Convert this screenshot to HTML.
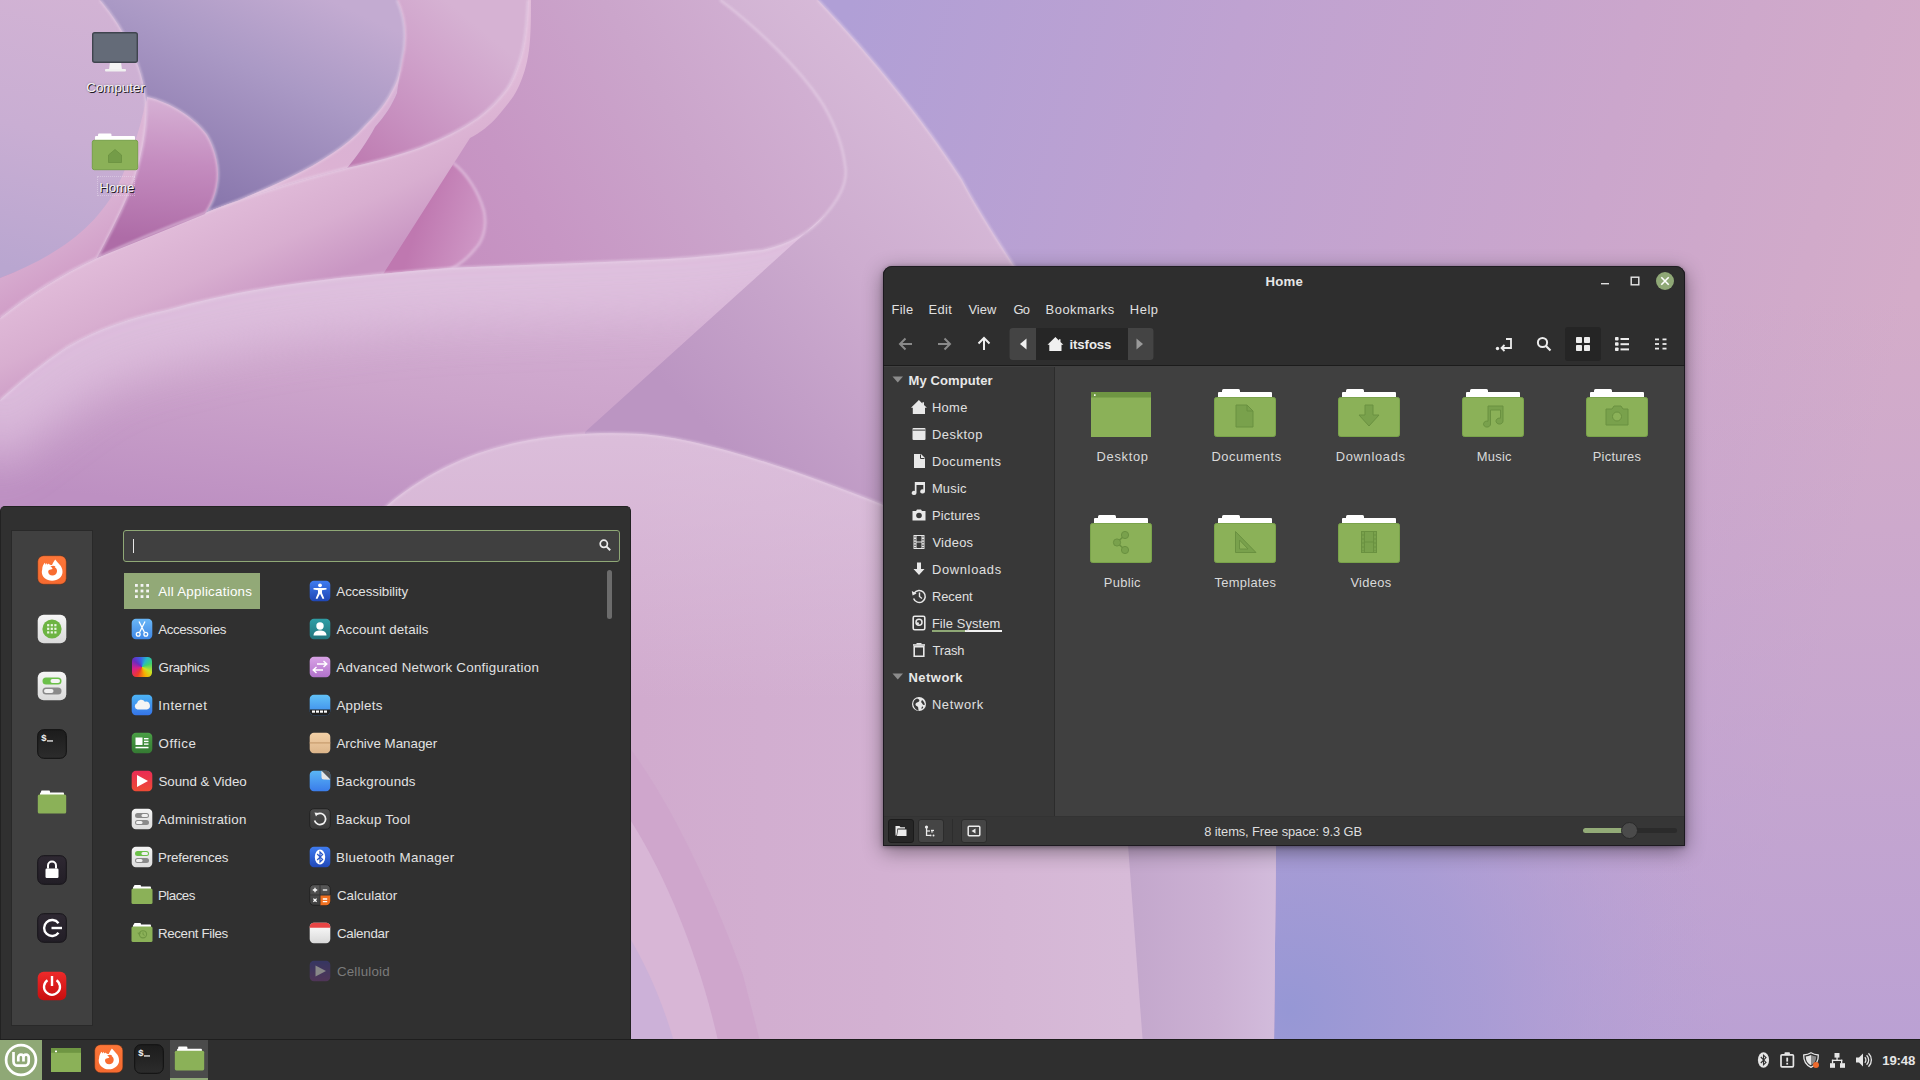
<!DOCTYPE html>
<html lang="en">
<head>
<meta charset="utf-8">
<title>Linux Mint Cinnamon Desktop</title>
<style>
*{box-sizing:border-box;margin:0;padding:0}
html,body{width:1920px;height:1080px;overflow:hidden;background:#c9a8cf;font-family:"Liberation Sans",sans-serif;color:#dcdcdc}
#wall{position:absolute;left:0;top:0;width:1920px;height:1080px}
.abs{position:absolute}
.t{position:absolute;white-space:nowrap;line-height:1}
/* taskbar */
#panel{position:absolute;left:0;top:1039px;width:1920px;height:41px;background:#2f2f2f;border-top:1px solid #1e1e1e}
/* menu */
#menu{position:absolute;left:0;top:506px;width:631px;height:533px;background:#303030;border:1px solid #222;border-bottom:none;border-radius:5px 5px 0 0}
#favs{position:absolute;left:11px;top:530px;width:82px;height:496px;background:#404040;border:1px solid #292929}
#search{position:absolute;left:123px;top:530px;width:497px;height:32px;background:#404040;border:1px solid #8fa876;border-radius:3px}
#sel{position:absolute;left:124px;top:573px;width:136px;height:36px;background:#92a977}
.mi{position:absolute;font-size:13.9px;color:#e0e0e0;white-space:nowrap;line-height:16px}
/* window */
#win{position:absolute;left:883px;top:266px;width:802px;height:580px;background:#404040;border-radius:9px 9px 0 0;box-shadow:0 5px 20px rgba(0,0,0,.42),0 1px 4px rgba(0,0,0,.35);overflow:hidden}
#hdr{position:absolute;left:0;top:0;width:802px;height:100px;background:#2e2e2e;border-bottom:1px solid #1c1c1c}
#side{position:absolute;left:0;top:101px;width:172px;height:449px;background:#383838;border-right:1px solid #2c2c2c}
#status{position:absolute;left:0;top:550px;width:802px;height:29px;background:#363636;border-top:1px solid #333}
.sb{position:absolute;font-size:13.4px;color:#dedede;white-space:nowrap;line-height:16px}
.lbl{position:absolute;font-size:13.5px;color:#d8d8d8;white-space:nowrap;line-height:16px;text-align:center;width:120px}
.dl{font-size:13.4px;color:#fff;line-height:16px;text-shadow:1px 1px 1px rgba(0,0,0,.85),0 0 2px rgba(0,0,0,.4)}
#winb{position:absolute;left:883px;top:266px;width:802px;height:580px;border:1px solid rgba(24,20,28,.85);border-top-color:rgba(24,20,28,.6);border-radius:9px 9px 0 0}
</style>
</head>
<body>
<svg id="wall" viewBox="0 0 1920 1080">
<defs>
<linearGradient id="bg" x1="850" y1="0" x2="1920" y2="260" gradientUnits="userSpaceOnUse">
<stop offset="0" stop-color="#b09fd6"/><stop offset=".35" stop-color="#bfa2d1"/><stop offset=".7" stop-color="#cba6cc"/><stop offset="1" stop-color="#d4acc9"/>
</linearGradient>
<linearGradient id="bgv" x1="0" y1="300" x2="0" y2="1080" gradientUnits="userSpaceOnUse">
<stop offset="0" stop-color="#b69fd6" stop-opacity="0"/><stop offset="1" stop-color="#b09cd8" stop-opacity=".75"/>
</linearGradient>
<radialGradient id="blue" cx="1290" cy="1010" r="430" gradientUnits="userSpaceOnUse">
<stop offset="0" stop-color="#9697d5"/><stop offset=".45" stop-color="#a59bd5" stop-opacity=".8"/><stop offset="1" stop-color="#b5a0d4" stop-opacity="0"/>
</radialGradient>
<linearGradient id="gG" x1="980" y1="150" x2="700" y2="420" gradientUnits="userSpaceOnUse">
<stop offset="0" stop-color="#d7bad8"/><stop offset=".45" stop-color="#cdaccf"/><stop offset="1" stop-color="#bb95c2"/>
</linearGradient>
<linearGradient id="gGb" x1="1130" y1="0" x2="1274" y2="0" gradientUnits="userSpaceOnUse"><stop offset="0" stop-color="#c3a7cc"/><stop offset=".6" stop-color="#cbb0d3"/><stop offset="1" stop-color="#d2bbdb"/></linearGradient>
<linearGradient id="gHb" x1="640" y1="0" x2="1130" y2="0" gradientUnits="userSpaceOnUse"><stop offset="0" stop-color="#d1abce"/><stop offset=".5" stop-color="#d3b1d2"/><stop offset="1" stop-color="#d7bbd8"/></linearGradient>
<linearGradient id="gHt" x1="0" y1="430" x2="0" y2="700" gradientUnits="userSpaceOnUse"><stop offset="0" stop-color="#e0c6e0" stop-opacity=".7"/><stop offset="1" stop-color="#e0c6e0" stop-opacity="0"/></linearGradient>
<linearGradient id="gDE" x1="800" y1="40" x2="440" y2="260" gradientUnits="userSpaceOnUse"><stop offset="0" stop-color="#d2b1d3"/><stop offset=".35" stop-color="#cba5cb"/><stop offset=".75" stop-color="#c796c4"/><stop offset="1" stop-color="#c58fc0"/></linearGradient>
<linearGradient id="gEface" x1="330" y1="270" x2="300" y2="520" gradientUnits="userSpaceOnUse"><stop offset="0" stop-color="#d4b0d3"/><stop offset=".45" stop-color="#cca4cb"/><stop offset="1" stop-color="#bd90c2"/></linearGradient>
<linearGradient id="gH" x1="600" y1="430" x2="700" y2="1040" gradientUnits="userSpaceOnUse">
<stop offset="0" stop-color="#d8bbd9"/><stop offset=".3" stop-color="#d3b3d4"/><stop offset="1" stop-color="#cfabd0"/>
</linearGradient>
<linearGradient id="gD" x1="215" y1="210" x2="260" y2="310" gradientUnits="userSpaceOnUse"><stop offset="0" stop-color="#e0bad8"/><stop offset=".5" stop-color="#d8aed0"/><stop offset="1" stop-color="#c996c3"/></linearGradient>
<linearGradient id="gCin" x1="350" y1="165" x2="470" y2="20" gradientUnits="userSpaceOnUse"><stop offset="0" stop-color="#bd7ab0"/><stop offset=".35" stop-color="#c78fbf"/><stop offset=".7" stop-color="#d0a3cb"/><stop offset="1" stop-color="#d6b2d3"/></linearGradient>
<linearGradient id="gDr" x1="300" y1="0" x2="390" y2="0" gradientUnits="userSpaceOnUse">
<stop offset="0" stop-color="#c28abc" stop-opacity="0"/><stop offset="1" stop-color="#bd80b6" stop-opacity=".9"/>
</linearGradient>
<linearGradient id="gC" x1="400" y1="70" x2="220" y2="210" gradientUnits="userSpaceOnUse"><stop offset="0" stop-color="#d8b3d6"/><stop offset=".5" stop-color="#dcb2d3"/><stop offset="1" stop-color="#e0bcd9"/></linearGradient>
<linearGradient id="gPur" x1="330" y1="0" x2="230" y2="215" gradientUnits="userSpaceOnUse"><stop offset="0" stop-color="#c3abd1"/><stop offset=".4" stop-color="#aa99c5"/><stop offset="1" stop-color="#8876ac"/></linearGradient>
<linearGradient id="gA" x1="90" y1="0" x2="20" y2="270" gradientUnits="userSpaceOnUse"><stop offset="0" stop-color="#d2b3d4"/><stop offset=".5" stop-color="#c9aed3"/><stop offset="1" stop-color="#b9a6d0"/></linearGradient>
<linearGradient id="gAe" x1="50" y1="215" x2="80" y2="270" gradientUnits="userSpaceOnUse">
<stop offset="0" stop-color="#dcb5d5"/><stop offset="1" stop-color="#d19fc8"/>
</linearGradient>
<linearGradient id="gB" x1="170" y1="100" x2="160" y2="240" gradientUnits="userSpaceOnUse">
<stop offset="0" stop-color="#d6b0d4"/><stop offset=".45" stop-color="#c48cbf"/><stop offset="1" stop-color="#ae6ca7"/>
</linearGradient>
<linearGradient id="gF" x1="420" y1="215" x2="485" y2="235" gradientUnits="userSpaceOnUse"><stop offset="0" stop-color="#bf78b0"/><stop offset="1" stop-color="#cf98c6"/></linearGradient>
<filter id="b1"><feGaussianBlur stdDeviation="1.2"/></filter>
<filter id="b16" x="-20%" y="-50%" width="140%" height="200%"><feGaussianBlur stdDeviation="24"/></filter>
<filter id="b8"><feGaussianBlur stdDeviation="8"/></filter>
</defs>
<rect width="1920" height="1080" fill="url(#bg)"/>
<rect width="1920" height="1080" fill="url(#bgv)"/>
<rect width="1920" height="1080" fill="url(#blue)"/>
<!-- petal G outer -->
<path d="M818,0 C870,55 922,118 962,180 C998,250 1094,380 1180,520 C1255,655 1283,760 1276,845 L1274,1045 L0,1045 L0,0Z" fill="url(#gG)"/>
<!-- pink region DE -->
<path d="M528,0 C527,25 525,45 520,60 C515,75 512,82 507,89 C498,101 490,109 478,118 L470,135 L378,282 L450,268 C520,265 590,263 650,260 C700,258 735,253 763,250 C790,244 810,233 825,215 C840,198 848,180 845,165 C842,140 830,115 820,100 C800,70 760,30 720,0Z" fill="url(#gDE)"/>
<!-- small petal F interior -->
<path d="M453,163 C465,172 478,190 484,211 C487,225 484,240 475,249 C468,258 460,264 451,269 C435,274 410,277 378,282 L470,135Z" fill="url(#gF)"/>
<path d="M453,163 C465,172 478,190 484,211 C487,225 484,240 475,249 C468,258 460,264 451,269 C440,273 430,275 420,276" fill="none" stroke="#dcb6d8" stroke-width="3" opacity=".9" filter="url(#b1)"/>
<!-- C inner deep pink -->
<path d="M397,0 C404,15 408,35 402,60 C400,75 398,85 397,93 C392,105 385,116 375,127 C368,140 358,155 347,168 C375,162 400,155 422,147 C445,138 462,129 478,118 C490,109 498,101 507,89 C512,82 515,75 520,60 C525,45 527,25 528,0Z" fill="url(#gCin)"/>
<!-- purple inner -->
<path d="M95,0 L397,0 C404,15 408,35 402,60 C400,75 396,85 391,93 C385,105 375,116 364,127 C355,137 345,145 333,153 C320,162 305,170 289,178 C268,188 245,198 222,207 L200,215 L97,258Z" fill="url(#gPur)"/>
<!-- C rim -->
<path d="M402,60 C400,75 396,85 391,93 C385,105 375,116 364,127 C355,137 345,145 333,153 C320,162 305,170 289,178 C268,188 245,198 222,207 L200,215 C222,206 245,198 267,191 C295,182 320,175 347,168 C358,155 368,140 375,127 C385,116 392,105 397,93 C398,85 400,75 402,60Z" fill="url(#gC)"/>
<!-- petal D face -->
<path d="M528,0 C527,25 525,45 520,60 C515,75 512,82 507,89 C498,101 490,109 478,118 C462,129 445,138 422,147 C400,155 375,162 347,168 C320,175 295,182 267,191 C245,198 222,206 200,215 C160,230 125,245 97,258 C60,275 25,298 0,318 L0,400 C20,382 40,365 67,347 C100,328 130,318 167,310 C210,298 255,289 300,283 C330,279 355,277 378,282 L470,138 C480,133 490,125 497,117 C507,105 513,98 517,90 C523,78 527,65 529,50 C531,35 531,15 531,0Z" fill="url(#gD)"/>
<!-- petal E face -->
<clipPath id="cE"><path d="M0,400 C20,382 40,365 67,347 C100,328 130,318 167,310 C210,298 255,289 300,283 C350,276 400,272 450,268 C520,265 590,263 650,260 C700,258 735,253 763,250 C790,244 810,233 825,215 L585,432 L585,560 L0,560Z"/></clipPath>
<path d="M0,400 C20,382 40,365 67,347 C100,328 130,318 167,310 C210,298 255,289 300,283 C350,276 400,272 450,268 C520,265 590,263 650,260 C700,258 735,253 763,250 C790,244 810,233 825,215 L585,432 L585,560 L0,560Z" fill="url(#gEface)"/>
<g clip-path="url(#cE)"><path d="M-40,425 C20,382 40,365 67,347 C100,328 130,318 167,310 C210,298 255,289 300,283 C350,276 400,272 450,268 C520,265 590,263 650,260 C700,258 735,253 763,250 C790,244 810,233 840,200" fill="none" stroke="#e2c6e2" stroke-width="110" opacity=".72" filter="url(#b16)"/></g>
<!-- petal H -->
<path d="M380,512 C420,475 470,452 520,442 C560,434 600,432 640,434 C700,438 790,468 883,505 L1200,560 C1255,655 1283,760 1276,845 L1274,1045 L380,1045Z" fill="url(#gHb)"/>
<path d="M380,512 C420,475 470,452 520,442 C560,434 600,432 640,434 C700,438 790,468 883,505 L1200,560 L1255,700 L380,700Z" fill="url(#gHt)"/>
<path d="M1128,845 L1276,845 L1274,1045 L1143,1045Z" fill="url(#gGb)"/>
<!-- lower-left curves -->
<path d="M625,742 C671,800 716,900 743,975 L761,1045 L625,1045Z" fill="#cfa6cc"/>
<path d="M625,812 C664,870 699,955 719,1045 L625,1045Z" fill="#d8b6d6"/>
<path d="M625,930 C650,970 665,1010 675,1045 L625,1045Z" fill="#ccb1d8"/>
<!-- petal B -->
<path d="M147,97 C170,102 195,118 207,135 C216,150 220,170 217,185 C215,198 210,207 205,214 L97,258 L130,180Z" fill="url(#gB)"/>
<!-- petal A -->
<path d="M100,0 C125,30 142,65 146,100 C148,140 135,180 115,210 C100,232 60,255 0,278 L0,0Z" fill="url(#gA)"/>
<path d="M146,100 C148,140 135,180 128,195 C115,225 97,258 97,258 C60,275 25,298 0,318 L0,278 C60,255 98,225 118,185 C130,160 140,130 146,100Z" fill="url(#gAe)"/>
<!-- rims -->
<g fill="none" stroke="#ead6ea" stroke-width="2.6" opacity=".55" filter="url(#b1)">
<path d="M650,260 C700,258 735,253 763,250 C790,244 810,233 825,215 C840,198 848,180 845,165 C842,140 830,115 820,100 C800,70 760,30 720,0"/>
<path d="M818,0 C870,55 922,118 962,180 C998,250 1094,380 1180,520"/>
<path d="M380,512 C420,475 470,452 520,442 C560,434 600,432 640,434 C700,438 790,468 883,505"/>
<path d="M528,0 C527,25 525,45 520,60 C515,75 512,82 507,89 C498,101 490,109 478,118 C462,129 445,138 422,147 C400,155 375,162 347,168 C320,175 295,182 267,191 C245,198 222,206 200,215 C160,230 125,245 97,258 C60,275 25,298 0,318"/>
<path d="M397,0 C404,15 408,35 402,60 C400,75 396,85 391,93 C385,105 375,116 364,127 C355,137 345,145 333,153 C320,162 305,170 289,178 C268,188 245,198 222,207"/>
<path d="M0,400 C20,382 40,365 67,347 C100,328 130,318 167,310 C210,298 255,289 300,283 C350,276 400,272 450,268 C520,265 590,263 650,260"/>
<path d="M147,97 C170,102 195,118 207,135 C216,150 220,170 217,185 C215,198 210,207 205,214"/>
<path d="M100,0 C125,30 142,65 146,100 C148,140 135,180 128,195 C115,225 97,258 97,258"/>
</g>
</svg>
<svg class="abs" style="left:90px;top:30px" width="50" height="44" viewBox="0 0 50 44"><path d="M20,32 H31 L32,40 H19Z" fill="#f4f4f4"/><rect x="15" y="39" width="21" height="2.600" rx="1" fill="#f0f0f0"/><rect x="2.700" y="2.700" width="44.600" height="29.600" rx="2" fill="#646b78" stroke="#3f444e" stroke-width="1.400"/></svg>
<svg class="abs" style="left:91px;top:133px" width="48" height="38" viewBox="0 0 48 38"><rect x="7" y=".5" width="13.500" height="5" rx="1.200" fill="#fff"/><rect x="4" y="3" width="40" height="6" rx="1" fill="#fff"/><rect x="1.300" y="7.300" width="45.400" height="29.400" rx="2" fill="#8bb158" stroke="#77a049" stroke-width="1"/><path d="M24,16.500 L17.500,22 V29.500 H30.500 V22Z" fill="#749c48" stroke="#6a9140" stroke-width=".8"/></svg>
<div class="abs" style="left:97px;top:176px;width:38px;height:20px;border:1px dotted rgba(235,225,240,.45)"></div>
<div id="win">
<div id="hdr"></div>
<div id="side"></div>
<div id="status"></div>
</div>
<div id="winb"></div>
<!-- title + controls -->
<svg class="abs" style="left:1595px;top:271px" width="80" height="20" viewBox="0 0 80 20">
<rect x="6" y="12" width="8" height="1.4" fill="#e0e0e0"/>
<rect x="36.2" y="6.2" width="7.6" height="7.6" fill="none" stroke="#e8e8e8" stroke-width="1.4"/>
<circle cx="70" cy="10" r="9" fill="#8fa876"/>
<path d="M66.3,6.3 L73.7,13.7 M73.7,6.3 L66.3,13.7" stroke="#fff" stroke-width="1.6" fill="none"/>
</svg>
<!-- menubar -->
<!-- toolbar -->
<svg class="abs" style="left:890px;top:328px" width="270" height="32" viewBox="0 0 270 32">
<g fill="none" stroke-width="2" stroke-linecap="butt">
<path d="M22,16 H10.5 M15.5,10.5 L10,16 L15.5,21.5" stroke="#8a8a8a"/>
<path d="M48,16 H59.5 M54.5,10.5 L60,16 L54.5,21.5" stroke="#8a8a8a"/>
<path d="M94,22 V10.5 M88.5,15.5 L94,10 L99.5,15.5" stroke="#f0f0f0"/>
</g>
<rect x="119.5" y="0" width="144" height="32" rx="3" fill="#262626"/>
<path d="M122.500,0 H146 V32 H122.500 A3,3 0 0 1 119.500,29 V3 A3,3 0 0 1 122.500,0Z" fill="#444"/>
<path d="M238,0 H260.500 A3,3 0 0 1 263.500,3 V29 A3,3 0 0 1 260.500,32 H238Z" fill="#444"/>
<path d="M136.500,10.500 V21.500 L130,16Z" fill="#f0f0f0"/>
<path d="M246.500,10.500 V21.500 L253,16Z" fill="#9a9a9a"/>
<path transform="translate(157.5,8)" d="M7.900,1 L0,8.800 H1.800 V15 H14 V8.800 H15.900 L13,5.900 V3.300 H11.400 V4.400Z" fill="#f0f0f0"/>
</svg>
<svg class="abs" style="left:1490px;top:327px" width="190" height="34" viewBox="0 0 190 34">
<rect x="75" y="0" width="36" height="34" rx="3" fill="#252525"/>
<!-- path toggle -->
<g fill="none" stroke="#ececec" stroke-width="1.8"><path d="M16,12 H21 V21 H12"/><path d="M14.500,18 L11.500,21 L14.500,24"/></g><circle cx="7.500" cy="21.500" r="1.700" fill="#ececec"/>
<!-- search -->
<circle cx="52.500" cy="15.500" r="4.600" fill="none" stroke="#ececec" stroke-width="2"/><path d="M56,19 L60.500,23.500" stroke="#ececec" stroke-width="2.200"/>
<!-- grid -->
<g fill="#ececec"><rect x="86" y="10" width="6" height="6" rx=".8"/><rect x="94" y="10" width="6" height="6" rx=".8"/><rect x="86" y="18" width="6" height="6" rx=".8"/><rect x="94" y="18" width="6" height="6" rx=".8"/>
<!-- list -->
<rect x="125" y="10" width="3.600" height="3.600" rx=".8"/><rect x="125" y="15.200" width="3.600" height="3.600" rx=".8"/><rect x="125" y="20.400" width="3.600" height="3.600" rx=".8"/>
<rect x="130.500" y="11" width="8.500" height="2"/><rect x="130.500" y="16.200" width="8.500" height="2"/><rect x="130.500" y="21.400" width="8.500" height="2"/>
<!-- compact -->
<rect x="165" y="11.500" width="4" height="1.800"/><rect x="165" y="16.100" width="4" height="1.800"/><rect x="165" y="20.700" width="4" height="1.800"/>
<rect x="172.500" y="11.500" width="4" height="1.800"/><rect x="172.500" y="16.100" width="4" height="1.800"/><rect x="172.500" y="20.700" width="4" height="1.800"/>
</g>
</svg>
<svg class="abs" style="left:892px;top:376px" width="12" height="8" viewBox="0 0 12 8"><path d="M0.500,0.500 H11 L5.750,6.500Z" fill="#8c8c8c"/></svg>
<svg class="abs" style="left:892px;top:673px" width="12" height="8" viewBox="0 0 12 8"><path d="M0.500,0.500 H11 L5.750,6.500Z" fill="#8c8c8c"/></svg>
<svg class="abs" style="left:911px;top:399px" width="16" height="16" viewBox="0 0 16 16"><path d="M7.900,1 L0,8.800 H1.800 V15 H14 V8.800 H15.900 L13,5.900 V3.300 H11.400 V4.400Z" fill="#e8e8e8"/></svg>
<svg class="abs" style="left:911px;top:426px" width="16" height="16" viewBox="0 0 16 16"><rect x="1.500" y="2" width="13" height="12" rx="1" fill="#e8e8e8"/><rect x="1.500" y="3.600" width="13" height="1" fill="#383838"/></svg>
<svg class="abs" style="left:911px;top:453px" width="16" height="16" viewBox="0 0 16 16"><path d="M3,1 H10 L14,5 V15 H3Z" fill="#e8e8e8"/><path d="M9.500,1.500 V5.500 H13.500" fill="none" stroke="#383838" stroke-width="1"/></svg>
<svg class="abs" style="left:911px;top:480px" width="16" height="16" viewBox="0 0 16 16"><path d="M3.800,2 H14 V11.500 A2.400,2.100 0 1 1 12.300,9.500 V5 H5.500 V13 A2.400,2.100 0 1 1 3.800,11Z" fill="#e8e8e8"/></svg>
<svg class="abs" style="left:911px;top:507px" width="16" height="16" viewBox="0 0 16 16"><path d="M1.500,4 H5 L6,2.500 H10 L11,4 H14.500 V13.500 H1.500Z" fill="#e8e8e8"/><circle cx="8" cy="8.500" r="2.800" fill="#383838"/></svg>
<svg class="abs" style="left:911px;top:534px" width="16" height="16" viewBox="0 0 16 16"><path d="M2.500,1 H13.500 V15 H2.500Z M5.500,2 V7.500 H10.500 V2Z M5.500,8.500 V14 H10.500 V8.500Z M3.400,2.200 V3.600 H4.600 V2.200Z M3.400,5 V6.400 H4.600 V5Z M3.400,7.800 V9.200 H4.600 V7.800Z M3.400,10.600 V12 H4.600 V10.600Z M3.400,13 V14 H4.600 V13Z M11.400,2.200 V3.600 H12.600 V2.200Z M11.400,5 V6.400 H12.600 V5Z M11.400,7.800 V9.200 H12.600 V7.800Z M11.400,10.600 V12 H12.600 V10.600Z M11.400,13 V14 H12.600 V13Z" fill="#e8e8e8" fill-rule="evenodd"/></svg>
<svg class="abs" style="left:911px;top:561px" width="16" height="16" viewBox="0 0 16 16"><path d="M6,1.500 H10 V8 H13.500 L8,14 L2.500,8 H6Z" fill="#e8e8e8"/></svg>
<svg class="abs" style="left:911px;top:588px" width="16" height="16" viewBox="0 0 16 16"><path d="M3.200,5.200 A6,6 0 1 1 2.600,10.500" fill="none" stroke="#e8e8e8" stroke-width="1.500"/><path d="M0.800,3 L1.600,7.400 L5.600,5.600Z" fill="#e8e8e8"/><path d="M8.500,4.500 V8.500 L11,10.500" fill="none" stroke="#e8e8e8" stroke-width="1.400"/></svg>
<svg class="abs" style="left:911px;top:615px" width="16" height="16" viewBox="0 0 16 16"><rect x="2.200" y="1.200" width="11.600" height="13.600" rx="1.500" fill="none" stroke="#e8e8e8" stroke-width="1.600"/><circle cx="8" cy="7.300" r="3" fill="none" stroke="#e8e8e8" stroke-width="1.500"/><circle cx="6.700" cy="8.500" r="1.300" fill="#e8e8e8"/></svg>
<svg class="abs" style="left:911px;top:642px" width="16" height="16" viewBox="0 0 16 16"><path d="M3.200,4.800 H12.800 V14.200 H3.200Z" fill="none" stroke="#e8e8e8" stroke-width="1.600"/><rect x="2" y="2.200" width="12" height="1.600" fill="#e8e8e8"/><rect x="5.500" y="1" width="5" height="1.500" fill="#e8e8e8"/></svg>
<svg class="abs" style="left:911px;top:696px" width="16" height="16" viewBox="0 0 16 16"><circle cx="8" cy="8" r="7" fill="#e8e8e8"/><path d="M6,2.500 C8,3 9,4 8,5.500 C7,6.500 5,6 4.500,8 C4,9.500 6,10 7,11 C7.500,12 7,13.500 8,14.500 C6,14.800 2.500,12 2.200,8 C2.200,5 4,3 6,2.500Z M11,4 C12.500,5 13.500,6.500 13.800,8.500 C13,9.500 12,9 11.500,8 C11,7 10,6.500 10.200,5.500Z M11,10.500 C12,10.500 12.500,11 12,12 C11.500,12.800 10.500,13.200 10.300,12.500Z" fill="#383838"/></svg>
<div class="abs" style="left:932px;top:630px;width:33px;height:2px;background:#8fa876"></div><div class="abs" style="left:965px;top:630px;width:37px;height:2px;background:#f2f2f2"></div>

<svg class="abs" style="left:1091px;top:392px" width="60" height="45" viewBox="0 0 60 45"><rect width="60" height="45" fill="#8bb158"/><rect width="60" height="5.500" fill="#6f9643"/><rect x="3" y="2.300" width="1.600" height="1.600" fill="#fff"/></svg>
<svg class="abs" style="left:1214px;top:389px" width="62" height="48" viewBox="0 0 62 48"><rect x="8" y="0" width="18" height="6" rx="1.500" fill="#fff"/><rect x="4" y="3" width="54" height="8" rx="1" fill="#fff"/><rect x=".5" y="8.500" width="61" height="39" rx="2" fill="#8bb158" stroke="#7aa34b" stroke-width="1"/><path d="M22,16 H33 L39,22 V38 H22Z" fill="#79a14c" stroke="#6a9140" stroke-width="1"/><path d="M33,16 V22 H39" fill="none" stroke="#6a9140" stroke-width="1"/></svg>
<svg class="abs" style="left:1338px;top:389px" width="62" height="48" viewBox="0 0 62 48"><rect x="8" y="0" width="18" height="6" rx="1.500" fill="#fff"/><rect x="4" y="3" width="54" height="8" rx="1" fill="#fff"/><rect x=".5" y="8.500" width="61" height="39" rx="2" fill="#8bb158" stroke="#7aa34b" stroke-width="1"/><path d="M27,16 H35 V26 H41 L31,37 L21,26 H27Z" fill="#79a14c" stroke="#6a9140" stroke-width="1"/></svg>
<svg class="abs" style="left:1462px;top:389px" width="62" height="48" viewBox="0 0 62 48"><rect x="8" y="0" width="18" height="6" rx="1.500" fill="#fff"/><rect x="4" y="3" width="54" height="8" rx="1" fill="#fff"/><rect x=".5" y="8.500" width="61" height="39" rx="2" fill="#8bb158" stroke="#7aa34b" stroke-width="1"/><path d="M26,17 H41 V32 A3.500,3 0 1 1 38.500,29.200 V21 H28.500 V35 A3.500,3 0 1 1 26,32.200Z" fill="#79a14c" stroke="#6a9140" stroke-width="1"/></svg>
<svg class="abs" style="left:1586px;top:389px" width="62" height="48" viewBox="0 0 62 48"><rect x="8" y="0" width="18" height="6" rx="1.500" fill="#fff"/><rect x="4" y="3" width="54" height="8" rx="1" fill="#fff"/><rect x=".5" y="8.500" width="61" height="39" rx="2" fill="#8bb158" stroke="#7aa34b" stroke-width="1"/><path d="M20,20 H26 L28,17 H35 L37,20 H42 V36 H20Z" fill="#79a14c" stroke="#6a9140" stroke-width="1"/><circle cx="31" cy="27.500" r="4.500" fill="#8bb158" stroke="#6a9140" stroke-width="1"/></svg>
<svg class="abs" style="left:1090px;top:515px" width="62" height="48" viewBox="0 0 62 48"><rect x="8" y="0" width="18" height="6" rx="1.500" fill="#fff"/><rect x="4" y="3" width="54" height="8" rx="1" fill="#fff"/><rect x=".5" y="8.500" width="61" height="39" rx="2" fill="#8bb158" stroke="#7aa34b" stroke-width="1"/><path d="M35,20 L27,27.500 L35,35" fill="none" stroke="#6a9140" stroke-width="1.500"/><circle cx="35" cy="20" r="3.600" fill="#79a14c" stroke="#6a9140" stroke-width="1"/><circle cx="27" cy="27.500" r="3.600" fill="#79a14c" stroke="#6a9140" stroke-width="1"/><circle cx="35" cy="35" r="3.600" fill="#79a14c" stroke="#6a9140" stroke-width="1"/></svg>
<svg class="abs" style="left:1214px;top:515px" width="62" height="48" viewBox="0 0 62 48"><rect x="8" y="0" width="18" height="6" rx="1.500" fill="#fff"/><rect x="4" y="3" width="54" height="8" rx="1" fill="#fff"/><rect x=".5" y="8.500" width="61" height="39" rx="2" fill="#8bb158" stroke="#7aa34b" stroke-width="1"/><path d="M21.500,16.500 V37.500 H42Z M25.500,25 V34 H34Z" fill="#79a14c" stroke="#6a9140" stroke-width="1" fill-rule="evenodd"/></svg>
<svg class="abs" style="left:1338px;top:515px" width="62" height="48" viewBox="0 0 62 48"><rect x="8" y="0" width="18" height="6" rx="1.500" fill="#fff"/><rect x="4" y="3" width="54" height="8" rx="1" fill="#fff"/><rect x=".5" y="8.500" width="61" height="39" rx="2" fill="#8bb158" stroke="#7aa34b" stroke-width="1"/><rect x="23.500" y="16.500" width="15" height="21" fill="#79a14c" stroke="#6a9140" stroke-width="1"/><path d="M26.500,17 V37 M35.500,17 V37 M26.500,27 H35.500" stroke="#6a9140" stroke-width="1" fill="none"/><path d="M25,19 V36" stroke="#6a9140" stroke-width="1" stroke-dasharray="2 2"/><path d="M37,19 V36" stroke="#6a9140" stroke-width="1" stroke-dasharray="2 2"/></svg>

<div class="abs" style="left:888px;top:819px;width:26px;height:24px;background:#262626;border:1px solid #1b1b1b;border-radius:3px"></div>
<div class="abs" style="left:918px;top:819px;width:26px;height:24px;background:#454545;border:1px solid #2c2c2c;border-radius:3px"></div>
<div class="abs" style="left:952px;top:819px;width:1px;height:24px;background:#2d2d2d"></div>
<div class="abs" style="left:961px;top:819px;width:26px;height:24px;background:#454545;border:1px solid #2c2c2c;border-radius:3px"></div>
<svg class="abs" style="left:888px;top:819px" width="100" height="24" viewBox="0 0 100 24"><g fill="#ececec"><path d="M7.500,7 H11.500 L12.500,8.300 H17 V9.500 H9.500 L8.500,16.500 H7.500Z"/><path d="M10,10.500 H18.500 V17 H9Z"/><circle cx="38.500" cy="8" r="1.600"/><rect x="37.900" y="8" width="1.300" height="9"/><rect x="38" y="11.400" width="4" height="1.200"/><rect x="38" y="15.800" width="4" height="1.200"/><rect x="43" y="10.800" width="3" height="1.200"/><rect x="43" y="12.400" width="2.200" height="1"/><circle cx="45.500" cy="16.400" r="1"/><circle cx="42.600" cy="16.400" r=".9"/></g><rect x="80.200" y="7.200" width="11.600" height="9.600" rx="1" fill="none" stroke="#ececec" stroke-width="1.500"/><path d="M87.500,9.500 V14.500 L83.500,12Z" fill="#ececec"/></svg>
<div class="abs" style="left:1583px;top:828px;width:94px;height:5px;border-radius:3px;background:#2b2b2b"></div>
<div class="abs" style="left:1583px;top:828px;width:46px;height:5px;border-radius:3px;background:#93ab78"></div>
<div class="abs" style="left:1621px;top:822px;width:17px;height:17px;border-radius:50%;background:#4b4b4b;border:1px solid #2a2a2a"></div>

<div id="menu"></div><div id="favs"></div><div id="search"></div><div id="sel"></div>
<div class="abs" style="left:133px;top:539px;width:1px;height:14px;background:#e8e8e8"></div>
<svg class="abs" style="left:598px;top:538px" width="14" height="14" viewBox="0 0 14 14"><circle cx="5.800" cy="5.800" r="3.600" fill="none" stroke="#ececec" stroke-width="1.700"/><path d="M8.600,8.600 L12.200,12.200" stroke="#ececec" stroke-width="2"/></svg>
<div class="abs" style="left:607px;top:570px;width:5px;height:49px;border-radius:3px;background:#6c6c6c"></div>
<svg class="abs" style="left:131px;top:580px" width="22" height="22" viewBox="0 0 22 22"><g fill="#f4f4f4"><rect x="4.0" y="4.0" width="2.800" height="2.800"/><rect x="4.0" y="9.6" width="2.800" height="2.800"/><rect x="4.0" y="15.2" width="2.800" height="2.800"/><rect x="9.6" y="4.0" width="2.800" height="2.800"/><rect x="9.6" y="9.6" width="2.800" height="2.800"/><rect x="9.6" y="15.2" width="2.800" height="2.800"/><rect x="15.2" y="4.0" width="2.800" height="2.800"/><rect x="15.2" y="9.6" width="2.800" height="2.800"/><rect x="15.2" y="15.2" width="2.800" height="2.800"/></g></svg>
<svg class="abs" style="left:131px;top:618px" width="22" height="22" viewBox="0 0 22 22"><defs><linearGradient id="g16653c6" x1="0" y1="0" x2="0" y2="1"><stop offset="0" stop-color="#6ab7f7"/><stop offset="1" stop-color="#3f87e6"/></linearGradient></defs><rect x=".7" y=".7" width="20.600" height="20.600" rx="4.2" fill="url(#g16653c6)"/><g fill="none" stroke="#fff" stroke-width="1.300"><path d="M8,3.500 L13.500,14.500 M14,3.500 L8.500,14.500"/><circle cx="7.200" cy="16.200" r="1.900"/><circle cx="14.800" cy="16.200" r="1.900"/></g></svg>
<svg class="abs" style="left:131px;top:656px" width="22" height="22" viewBox="0 0 22 22"><foreignObject x=".7" y=".7" width="20.600" height="20.600"><div style="width:20.600px;height:20.600px;border-radius:4.200px;background:conic-gradient(from -50deg at 50% 50%,#6a2bc0,#3a63e6 12%,#27b8c8 22%,#3fd070 33%,#c8e326 47%,#f5b000 58%,#ee3a2a 72%,#d61f8e 86%,#6a2bc0)"></div></foreignObject></svg>
<svg class="abs" style="left:131px;top:694px" width="22" height="22" viewBox="0 0 22 22"><defs><linearGradient id="ga16968c" x1="0" y1="0" x2="0" y2="1"><stop offset="0" stop-color="#4db4f5"/><stop offset="1" stop-color="#3574e8"/></linearGradient></defs><rect x=".7" y=".7" width="20.600" height="20.600" rx="4.2" fill="url(#ga16968c)"/><path d="M6.500,15.500 A3.200,3.200 0 0 1 6,9.300 A4.200,4.200 0 0 1 13.800,7.800 A3.900,3.900 0 0 1 16,15.500Z" fill="#f4f4f4"/></svg>
<svg class="abs" style="left:131px;top:732px" width="22" height="22" viewBox="0 0 22 22"><defs><linearGradient id="g0a38eb6" x1="0" y1="0" x2="0" y2="1"><stop offset="0" stop-color="#4a9f45"/><stop offset="1" stop-color="#357a33"/></linearGradient></defs><rect x=".7" y=".7" width="20.600" height="20.600" rx="4.2" fill="url(#g0a38eb6)"/><rect x="4.500" y="5.500" width="7" height="7.500" fill="#fff"/><rect x="13" y="6" width="4.500" height="1.400" fill="#fff"/><rect x="13" y="8.700" width="4.500" height="1.400" fill="#fff"/><rect x="13" y="11.400" width="4.500" height="1.400" fill="#fff"/><rect x="4.500" y="14.800" width="13" height="1.500" fill="#fff"/></svg>
<svg class="abs" style="left:131px;top:770px" width="22" height="22" viewBox="0 0 22 22"><defs><linearGradient id="g7515171" x1="0" y1="0" x2="0" y2="1"><stop offset="0" stop-color="#ea2c55"/><stop offset="1" stop-color="#ee4b35"/></linearGradient></defs><rect x=".7" y=".7" width="20.600" height="20.600" rx="4.2" fill="url(#g7515171)"/><path d="M6,5 L17,11 L6,17Z" fill="#fff"/></svg>
<svg class="abs" style="left:131px;top:808px" width="22" height="22" viewBox="0 0 22 22"><defs><linearGradient id="gf3f8f7f" x1="0" y1="0" x2="0" y2="1"><stop offset="0" stop-color="#f4f4f4"/><stop offset="1" stop-color="#dcdcdc"/></linearGradient></defs><rect x=".7" y=".7" width="20.600" height="20.600" rx="4.2" fill="url(#gf3f8f7f)"/><rect x="4" y="5" width="14" height="5" rx="2.500" fill="#8a8a8a"/><rect x="4" y="12" width="14" height="5" rx="2.500" fill="#8a8a8a"/><rect x="10.500" y="6" width="6.500" height="3" rx="1.500" fill="#f0f0f0"/><rect x="5" y="13" width="6.500" height="3" rx="1.500" fill="#f0f0f0"/></svg>
<svg class="abs" style="left:131px;top:846px" width="22" height="22" viewBox="0 0 22 22"><defs><linearGradient id="gb690c43" x1="0" y1="0" x2="0" y2="1"><stop offset="0" stop-color="#f4f4f4"/><stop offset="1" stop-color="#dcdcdc"/></linearGradient></defs><rect x=".7" y=".7" width="20.600" height="20.600" rx="4.2" fill="url(#gb690c43)"/><rect x="4" y="5" width="14" height="5" rx="2.500" fill="#6cc04a"/><rect x="4" y="12" width="14" height="5" rx="2.500" fill="#8a8a8a"/><rect x="10.500" y="6" width="6.500" height="3" rx="1.500" fill="#f0f0f0"/><rect x="5" y="13" width="6.500" height="3" rx="1.500" fill="#f0f0f0"/></svg>
<svg class="abs" style="left:131px;top:884px" width="22" height="22" viewBox="0 0 22 22"><rect x="3" y="1" width="7" height="3" rx="1" fill="#fff"/><rect x="2" y="2.500" width="18" height="4" rx=".8" fill="#fff"/><rect x=".5" y="4.500" width="21" height="15.500" rx="1.500" fill="#8bb158"/></svg>
<svg class="abs" style="left:131px;top:922px" width="22" height="22" viewBox="0 0 22 22"><rect x="3" y="1" width="7" height="3" rx="1" fill="#fff"/><rect x="2" y="2.500" width="18" height="4" rx=".8" fill="#fff"/><rect x=".5" y="4.500" width="21" height="15.500" rx="1.500" fill="#8bb158"/><circle cx="12" cy="12.300" r="3.600" fill="none" stroke="#6f9643" stroke-width="1.100"/><path d="M12,10.300 V12.500 L13.600,13.300" fill="none" stroke="#6f9643" stroke-width="1"/><path d="M6.300,10.800 L8.600,13.400 L10,10.600Z" fill="#6f9643"/></svg>
<svg class="abs" style="left:309px;top:580px" width="22" height="22" viewBox="0 0 22 22"><defs><linearGradient id="g06bd3fc" x1="0" y1="0" x2="0" y2="1"><stop offset="0" stop-color="#3f7cf0"/><stop offset="1" stop-color="#1f46b4"/></linearGradient></defs><rect x=".7" y=".7" width="20.600" height="20.600" rx="4.2" fill="url(#g06bd3fc)"/><circle cx="11" cy="5.300" r="1.900" fill="#fff"/><path d="M4.500,8 L17.500,8 L17.500,9.500 L13,10.200 L13,13 L15.300,18.500 L13.700,19 L11,13.800 L8.300,19 L6.700,18.500 L9,13 L9,10.200 L4.500,9.500Z" fill="#fff"/></svg>
<svg class="abs" style="left:309px;top:618px" width="22" height="22" viewBox="0 0 22 22"><defs><linearGradient id="g60eb6a1" x1="0" y1="0" x2="0" y2="1"><stop offset="0" stop-color="#2f9ea6"/><stop offset="1" stop-color="#23747c"/></linearGradient></defs><rect x=".7" y=".7" width="20.600" height="20.600" rx="4.2" fill="url(#g60eb6a1)"/><circle cx="11" cy="8" r="3.700" fill="#fff"/><path d="M4.500,17.500 C4.500,13.500 8,12.500 11,12.500 C14,12.500 17.500,13.500 17.500,17.500Z" fill="#fff"/></svg>
<svg class="abs" style="left:309px;top:656px" width="22" height="22" viewBox="0 0 22 22"><defs><linearGradient id="ga2aa28f" x1="0" y1="0" x2="0" y2="1"><stop offset="0" stop-color="#d9a3e6"/><stop offset="1" stop-color="#b172cb"/></linearGradient></defs><rect x=".7" y=".7" width="20.600" height="20.600" rx="4.2" fill="url(#ga2aa28f)"/><g fill="none" stroke="#fff" stroke-width="1.400"><path d="M8,8 H17.500 M14.500,5 L17.800,8 L14.500,11"/><path d="M14,14 H4.500 M7.500,11 L4.200,14 L7.500,17"/></g></svg>
<svg class="abs" style="left:309px;top:694px" width="22" height="22" viewBox="0 0 22 22"><defs><linearGradient id="gbf8e5ab" x1="0" y1="0" x2="0" y2="1"><stop offset="0" stop-color="#62c2f7"/><stop offset="1" stop-color="#3a86ea"/></linearGradient></defs><rect x=".7" y=".7" width="20.600" height="20.600" rx="4.2" fill="url(#gbf8e5ab)"/><path d="M.7,15.500 H21.300 V17.100 A4.200,4.200 0 0 1 17.100,21.300 H4.900 A4.200,4.200 0 0 1 .7,17.100Z" fill="#222"/><g fill="#fff"><rect x="3" y="16.500" width="3" height="2.200"/><rect x="7" y="16.500" width="3" height="2.200"/><rect x="11" y="16.500" width="3" height="2.200"/><rect x="15" y="16.500" width="3" height="2.200"/></g></svg>
<svg class="abs" style="left:309px;top:732px" width="22" height="22" viewBox="0 0 22 22"><defs><linearGradient id="g046980a" x1="0" y1="0" x2="0" y2="1"><stop offset="0" stop-color="#f2d0a6"/><stop offset="1" stop-color="#dcb58a"/></linearGradient></defs><rect x=".7" y=".7" width="20.600" height="20.600" rx="4.2" fill="url(#g046980a)"/><rect x=".7" y="10.300" width="20.600" height="1.200" fill="#c79c6e"/></svg>
<svg class="abs" style="left:309px;top:770px" width="22" height="22" viewBox="0 0 22 22"><defs><linearGradient id="gdd0b0b6" x1="0" y1="0" x2="0" y2="1"><stop offset="0" stop-color="#5ab6f6"/><stop offset="1" stop-color="#3a7cea"/></linearGradient></defs><rect x=".7" y=".7" width="20.600" height="20.600" rx="4.2" fill="url(#gdd0b0b6)"/><path d="M12.500,.7 H17.100 A4.200,4.200 0 0 1 21.300,4.900 V9.500Z" fill="#555"/><path d="M12.500,.7 C13,5 15,8.500 21.300,9.500 C17,9.500 12.500,9 12.500,.7Z" fill="#e8e8e8"/><path d="M12.500,.7 L21.300,9.500 H15 A2.500,2.500 0 0 1 12.500,7Z" fill="#e6e6e6"/></svg>
<svg class="abs" style="left:309px;top:808px" width="22" height="22" viewBox="0 0 22 22"><defs><linearGradient id="g81955e2" x1="0" y1="0" x2="0" y2="1"><stop offset="0" stop-color="#4e4e4e"/><stop offset="1" stop-color="#3a3a3a"/></linearGradient></defs><rect x=".7" y=".7" width="20.600" height="20.600" rx="4.2" fill="url(#g81955e2)" stroke="#222" stroke-width="1"/><path d="M8,6.200 A5.600,5.600 0 1 1 5.600,12.500" fill="none" stroke="#f2f2f2" stroke-width="1.700"/><path d="M5.500,4.500 L9.800,5 L7,8.600Z" fill="#f2f2f2"/></svg>
<svg class="abs" style="left:309px;top:846px" width="22" height="22" viewBox="0 0 22 22"><defs><linearGradient id="g7345ed7" x1="0" y1="0" x2="0" y2="1"><stop offset="0" stop-color="#3f7cf0"/><stop offset="1" stop-color="#2048b8"/></linearGradient></defs><rect x=".7" y=".7" width="20.600" height="20.600" rx="4.2" fill="url(#g7345ed7)"/><ellipse cx="11" cy="11" rx="5.200" ry="7.600" fill="#fff"/><path d="M8.200,8 L13.600,13.400 L11,16 V6 L13.600,8.600 L8.200,14" fill="none" stroke="#2a57c8" stroke-width="1.200"/></svg>
<svg class="abs" style="left:309px;top:884px" width="22" height="22" viewBox="0 0 22 22"><defs><linearGradient id="g455076a" x1="0" y1="0" x2="0" y2="1"><stop offset="0" stop-color="#585858"/><stop offset="1" stop-color="#3e3e3e"/></linearGradient></defs><rect x=".7" y=".7" width="20.600" height="20.600" rx="4.2" fill="url(#g455076a)" stroke="#222" stroke-width="1"/><path d="M11,11 H21.300 V17.100 A4.200,4.200 0 0 1 17.100,21.300 H11Z" fill="#f07020"/><path d="M11,.7 V21.300 M.7,11 H21.300" stroke="#333" stroke-width="1"/><g stroke="#fff" stroke-width="1.300" fill="none"><path d="M3.800,6 H8.200 M6,3.800 V8.200"/><path d="M13.800,6 H18.200"/><path d="M4.400,14.600 L7.600,17.800 M7.600,14.600 L4.400,17.800"/><path d="M13.800,15 H18.200 M13.800,17.600 H18.200"/></g></svg>
<svg class="abs" style="left:309px;top:922px" width="22" height="22" viewBox="0 0 22 22"><defs><linearGradient id="g7937f45" x1="0" y1="0" x2="0" y2="1"><stop offset="0" stop-color="#ffffff"/><stop offset="1" stop-color="#d8d8d8"/></linearGradient></defs><rect x=".7" y=".7" width="20.600" height="20.600" rx="4.2" fill="url(#g7937f45)"/><path d="M4.900,.7 H17.100 A4.200,4.200 0 0 1 21.300,4.900 V5.800 H.7 V4.900 A4.200,4.200 0 0 1 4.900,.7Z" fill="#e84545"/></svg>
<svg class="abs" style="left:309px;top:960px" width="22" height="22" viewBox="0 0 22 22"><g opacity=".55"><defs><linearGradient id="g03ef6fb" x1="0" y1="0" x2="0" y2="1"><stop offset="0" stop-color="#3c3c8a"/><stop offset="1" stop-color="#6a3a78"/></linearGradient></defs><rect x=".7" y=".7" width="20.600" height="20.600" rx="4.2" fill="url(#g03ef6fb)"/><path d="M6.500,5.500 L17,11 L6.500,16.500Z" fill="#d0d0d0"/></g></svg>
<svg class="abs" style="left:37.0px;top:555.0px" width="30" height="30" viewBox="0 0 30 30"><defs><linearGradient id="ffg" x1="0" y1="0" x2="0" y2="1"><stop offset="0" stop-color="#fd7638"/><stop offset="1" stop-color="#f56a30"/></linearGradient></defs><rect x=".7" y=".7" width="28.600" height="28.600" rx="6" fill="url(#ffg)" stroke="#5a2a12" stroke-opacity=".55" stroke-width=".8"/><path d="M5.200,14.500 C5.200,11.500 6.500,9 7.800,7.800 L8.800,9.700 L9.700,8 L10.600,9.700 L11.500,8.600 C12.500,9.600 13.500,10.100 15,10.100 C16,8 17,6 18.200,4.600 C19.500,6 21,8 22.500,9.500 C24.500,11.500 25.500,14 25.500,17 C25.500,21.900 20.800,25.700 15.100,25.700 C9.400,25.700 4.800,21.900 4.800,17 C4.800,16 5,15.200 5.200,14.500Z" fill="#fff"/><path d="M13.400,11.600 C15,10.600 17,10.600 18.600,11.400 L17.600,12 C19.500,13 20.200,15 20,16.500 C19.700,19 17.800,20.600 15.400,20.600 C13,20.600 11.200,19 11.200,16.800 C11.200,16 11.500,15.400 12,15 L15.500,14 C15.500,13 14.500,12 13.400,11.600Z" fill="#f86c31"/></svg>
<svg class="abs" style="left:37.0px;top:613.5px" width="30" height="30" viewBox="0 0 30 30"><defs><linearGradient id="swg" x1="0" y1="0" x2="0" y2="1"><stop offset="0" stop-color="#f6f6f6"/><stop offset="1" stop-color="#dadada"/></linearGradient></defs><rect x=".7" y=".7" width="28.600" height="28.600" rx="6" fill="url(#swg)"/><circle cx="15" cy="15" r="9.600" fill="#6db442"/><g fill="#eaf5e2"><rect x="10.1" y="10.1" width="2.200" height="2.200"/><rect x="10.1" y="13.7" width="2.200" height="2.200"/><rect x="10.1" y="17.3" width="2.200" height="2.200"/><rect x="13.7" y="10.1" width="2.200" height="2.200"/><rect x="13.7" y="13.7" width="2.200" height="2.200"/><rect x="13.7" y="17.3" width="2.200" height="2.200"/><rect x="17.3" y="10.1" width="2.200" height="2.200"/><rect x="17.3" y="13.7" width="2.200" height="2.200"/><rect x="17.3" y="17.3" width="2.200" height="2.200"/></g></svg>
<svg class="abs" style="left:37.0px;top:671.0px" width="30" height="30" viewBox="0 0 30 30"><rect x=".7" y=".7" width="28.600" height="28.600" rx="6" fill="url(#swg)"/><rect x="5.500" y="6.500" width="19" height="7" rx="3.500" fill="#6cc04a"/><rect x="5.500" y="16.500" width="19" height="7" rx="3.500" fill="#8a8a8a"/><rect x="13.500" y="8" width="9.500" height="4" rx="2" fill="#f4f4f4"/><rect x="7" y="18" width="9.500" height="4" rx="2" fill="#f0f0f0"/></svg>
<svg class="abs" style="left:37.0px;top:729.0px" width="30" height="30" viewBox="0 0 30 30"><defs><linearGradient id="tmg" x1="0" y1="0" x2="0" y2="1"><stop offset="0" stop-color="#1c1c1c"/><stop offset="1" stop-color="#2c2c2c"/></linearGradient></defs><rect x=".7" y=".7" width="28.600" height="28.600" rx="6" fill="url(#tmg)" stroke="#101010" stroke-width="1"/><text x="4" y="12.300" font-family="Liberation Mono,monospace" font-size="9.500" font-weight="bold" fill="#f0f0f0">$</text><rect x="10" y="11.300" width="6" height="1.300" fill="#f0f0f0"/></svg>
<svg class="abs" style="left:37.0px;top:787.0px" width="30" height="30" viewBox="0 0 30 30"><rect x="4" y="3.500" width="9" height="4" rx="1" fill="#fff"/><rect x="3" y="5.500" width="24" height="5" rx=".8" fill="#fff"/><rect x=".8" y="7.500" width="28.400" height="19" rx="1.500" fill="#8bb158"/></svg>
<svg class="abs" style="left:37.0px;top:854.5px" width="30" height="30" viewBox="0 0 30 30"><defs><linearGradient id="lkg" x1="0" y1="0" x2="0" y2="1"><stop offset="0" stop-color="#2e2832"/><stop offset="1" stop-color="#221e26"/></linearGradient></defs><rect x=".7" y=".7" width="28.600" height="28.600" rx="6" fill="url(#lkg)" stroke="#17141a" stroke-width="1"/><rect x="8.500" y="13.500" width="13" height="9.500" rx="1.200" fill="#fff"/><path d="M11,13.500 V10.500 A4,4 0 0 1 19,10.500 V13.500" fill="none" stroke="#fff" stroke-width="2"/></svg>
<svg class="abs" style="left:37.0px;top:913.0px" width="30" height="30" viewBox="0 0 30 30"><rect x=".7" y=".7" width="28.600" height="28.600" rx="6" fill="url(#lkg)" stroke="#17141a" stroke-width="1"/><path d="M21.500,10.200 A8,8 0 1 0 21.500,19.800" fill="none" stroke="#fff" stroke-width="2.400"/><rect x="14.500" y="13.800" width="10.500" height="2.400" fill="#fff"/></svg>
<svg class="abs" style="left:37.0px;top:971.0px" width="30" height="30" viewBox="0 0 30 30"><defs><linearGradient id="pwg" x1="0" y1="0" x2="0" y2="1"><stop offset="0" stop-color="#ee2a2a"/><stop offset="1" stop-color="#c80e0e"/></linearGradient></defs><rect x=".7" y=".7" width="28.600" height="28.600" rx="6" fill="url(#pwg)"/><path d="M10.500,9.200 A8,8 0 1 0 19.500,9.200" fill="none" stroke="#fff" stroke-width="2.300"/><rect x="13.800" y="5" width="2.400" height="10" fill="#fff"/></svg>
<div id="panel"></div>
<div class="abs" style="left:0;top:1040px;width:42px;height:40px;background:#8fa876"></div>
<svg class="abs" style="left:3px;top:1042px" width="36" height="36" viewBox="0 0 36 36"><circle cx="18" cy="18" r="14.900" fill="none" stroke="#fff" stroke-width="2.700"/><path d="M10.500,10 V19.500 A4.200,4.200 0 0 0 14.700,23.700 H21.500 A4.200,4.200 0 0 0 25.700,19.500 V15.200 A2.600,2.600 0 0 0 20.500,15.200 V19.500 M20.500,15.200 A2.600,2.600 0 0 0 15.300,15.200 V19.500" fill="none" stroke="#fff" stroke-width="2.700" stroke-linejoin="round"/></svg>
<svg class="abs" style="left:51px;top:1048px" width="30" height="24" viewBox="0 0 30 24"><rect width="30" height="24" fill="#8bb158"/><rect width="30" height="4.800" fill="#6f9643"/><rect x="4" y="2.600" width="2" height="1.600" fill="#fff"/></svg>
<svg class="abs" style="left:94.300px;top:1044.300px" width="29.500" height="29.500" viewBox="0 0 30 30"><defs><linearGradient id="ffg" x1="0" y1="0" x2="0" y2="1"><stop offset="0" stop-color="#fd7638"/><stop offset="1" stop-color="#f56a30"/></linearGradient></defs><rect x=".7" y=".7" width="28.600" height="28.600" rx="6" fill="url(#ffg)" stroke="#5a2a12" stroke-opacity=".55" stroke-width=".8"/><path d="M5.200,14.500 C5.200,11.500 6.500,9 7.800,7.800 L8.800,9.700 L9.700,8 L10.600,9.700 L11.500,8.600 C12.500,9.600 13.500,10.100 15,10.100 C16,8 17,6 18.200,4.600 C19.500,6 21,8 22.500,9.500 C24.500,11.500 25.500,14 25.500,17 C25.500,21.900 20.800,25.700 15.100,25.700 C9.400,25.700 4.800,21.900 4.800,17 C4.800,16 5,15.200 5.200,14.500Z" fill="#fff"/><path d="M13.400,11.600 C15,10.600 17,10.600 18.600,11.400 L17.600,12 C19.500,13 20.200,15 20,16.500 C19.700,19 17.800,20.600 15.400,20.600 C13,20.600 11.200,19 11.200,16.800 C11.200,16 11.500,15.400 12,15 L15.500,14 C15.500,13 14.500,12 13.400,11.600Z" fill="#f86c31"/></svg>
<svg class="abs" style="left:134px;top:1044px" width="30" height="30" viewBox="0 0 30 30"><defs><linearGradient id="tmg" x1="0" y1="0" x2="0" y2="1"><stop offset="0" stop-color="#1c1c1c"/><stop offset="1" stop-color="#2c2c2c"/></linearGradient></defs><rect x=".7" y=".7" width="28.600" height="28.600" rx="6" fill="url(#tmg)" stroke="#101010" stroke-width="1"/><text x="4" y="12.300" font-family="Liberation Mono,monospace" font-size="9.500" font-weight="bold" fill="#f0f0f0">$</text><rect x="10" y="11.300" width="6" height="1.300" fill="#f0f0f0"/></svg>
<div class="abs" style="left:170px;top:1040px;width:38px;height:40px;background:#4b4b4b"></div><div class="abs" style="left:170px;top:1078px;width:38px;height:2px;background:#8fa876"></div>
<svg class="abs" style="left:173.500px;top:1043px" width="31" height="31" viewBox="0 0 30 30"><rect x="4" y="3.500" width="9" height="4" rx="1" fill="#fff"/><rect x="3" y="5.500" width="24" height="5" rx=".8" fill="#fff"/><rect x=".8" y="7.500" width="28.400" height="19" rx="1.500" fill="#8bb158"/></svg>
<svg class="abs" style="left:1755px;top:1050px" width="120" height="20" viewBox="0 0 120 20"><ellipse cx="8.500" cy="10" rx="5.600" ry="7.800" fill="#e6e6e6"/><path d="M5.800,7 L11,12.400 L8.500,14.800 V5.200 L11,7.600 L5.800,13" fill="none" stroke="#2f2f2f" stroke-width="1.100"/><rect x="26" y="4.800" width="12.400" height="12" rx="1" fill="none" stroke="#e6e6e6" stroke-width="1.700"/><rect x="29.500" y="2.300" width="5.400" height="3" rx=".8" fill="#e6e6e6"/><rect x="31.300" y="7.600" width="1.800" height="4" fill="#e6e6e6"/><rect x="31.300" y="12.800" width="1.800" height="1.800" fill="#e6e6e6"/><path d="M56,2.800 C58.500,4.300 61,4.800 63.300,5 C63.500,10 61.500,14.800 56,17.300 C50.500,14.800 48.500,10 48.700,5 C51,4.800 53.500,4.300 56,2.800Z" fill="none" stroke="#e6e6e6" stroke-width="1.300"/><path d="M56,5 C54.300,5.900 52.500,6.400 50.800,6.600 C50.800,10 52,13.300 56,15.300Z" fill="#e6e6e6"/><path d="M56,5 C57.700,5.900 59.500,6.400 61.200,6.600 C61.200,10 60,13.300 56,15.300Z" fill="#8a8a8a"/><circle cx="61" cy="15" r="3" fill="#ee6a2c"/><g fill="#e6e6e6"><rect x="79.500" y="3" width="5" height="4.600"/><rect x="75" y="13.200" width="5" height="4.600"/><rect x="85" y="13.200" width="5" height="4.600"/><rect x="81.400" y="7" width="1.300" height="3.500"/><rect x="76.900" y="9.700" width="10.400" height="1.300"/><rect x="76.900" y="9.700" width="1.300" height="4"/><rect x="86" y="9.700" width="1.300" height="4"/></g><path d="M101,7.500 H104 L108,3.500 V16.500 L104,12.500 H101Z" fill="#e6e6e6"/><g fill="none" stroke="#e6e6e6" stroke-width="1.300"><path d="M109.800,7.300 A3.800,3.800 0 0 1 109.800,12.700"/><path d="M111.600,5.200 A6.600,6.600 0 0 1 111.600,14.800"/><path d="M113.500,3.200 A9.500,9.500 0 0 1 113.500,16.800"/></g></svg>
<div class="t" style="left:158.30px;top:584px;font-size:13.33px;line-height:16px;letter-spacing:0.266px;color:#ffffff">All Applications</div>
<div class="t" style="left:158.20px;top:622px;font-size:13.33px;line-height:16px;letter-spacing:-0.368px;color:#e2e2e2">Accessories</div>
<div class="t" style="left:158.60px;top:660px;font-size:13.33px;line-height:16px;letter-spacing:-0.324px;color:#e2e2e2">Graphics</div>
<div class="t" style="left:158.30px;top:698px;font-size:13.33px;line-height:16px;letter-spacing:0.487px;color:#e2e2e2">Internet</div>
<div class="t" style="left:158.60px;top:736px;font-size:13.33px;line-height:16px;letter-spacing:0.529px;color:#e2e2e2">Office</div>
<div class="t" style="left:158.40px;top:774px;font-size:13.33px;line-height:16px;letter-spacing:-0.031px;color:#e2e2e2">Sound &amp; Video</div>
<div class="t" style="left:158.20px;top:812px;font-size:13.33px;line-height:16px;letter-spacing:0.297px;color:#e2e2e2">Administration</div>
<div class="t" style="left:157.90px;top:850px;font-size:13.33px;line-height:16px;letter-spacing:-0.140px;color:#e2e2e2">Preferences</div>
<div class="t" style="left:157.90px;top:888px;font-size:13.33px;line-height:16px;letter-spacing:-0.508px;color:#e2e2e2">Places</div>
<div class="t" style="left:157.90px;top:926px;font-size:13.33px;line-height:16px;letter-spacing:-0.337px;color:#e2e2e2">Recent Files</div>
<div class="t" style="left:336.30px;top:584px;font-size:13.33px;line-height:16px;letter-spacing:-0.060px;color:#e2e2e2">Accessibility</div>
<div class="t" style="left:336.50px;top:622px;font-size:13.33px;line-height:16px;letter-spacing:0.113px;color:#e2e2e2">Account details</div>
<div class="t" style="left:336.30px;top:660px;font-size:13.33px;line-height:16px;letter-spacing:0.264px;color:#e2e2e2">Advanced Network Configuration</div>
<div class="t" style="left:336.40px;top:698px;font-size:13.33px;line-height:16px;letter-spacing:0.251px;color:#e2e2e2">Applets</div>
<div class="t" style="left:336.40px;top:736px;font-size:13.33px;line-height:16px;letter-spacing:0.006px;color:#e2e2e2">Archive Manager</div>
<div class="t" style="left:336.00px;top:774px;font-size:13.33px;line-height:16px;letter-spacing:0.167px;color:#e2e2e2">Backgrounds</div>
<div class="t" style="left:336.00px;top:812px;font-size:13.33px;line-height:16px;letter-spacing:0.185px;color:#e2e2e2">Backup Tool</div>
<div class="t" style="left:336.00px;top:850px;font-size:13.33px;line-height:16px;letter-spacing:0.351px;color:#e2e2e2">Bluetooth Manager</div>
<div class="t" style="left:336.90px;top:888px;font-size:13.33px;line-height:16px;letter-spacing:0.037px;color:#e2e2e2">Calculator</div>
<div class="t" style="left:336.90px;top:926px;font-size:13.33px;line-height:16px;letter-spacing:-0.264px;color:#e2e2e2">Calendar</div>
<div class="t" style="left:336.90px;top:964px;font-size:13.33px;line-height:16px;letter-spacing:0.212px;color:#7b7b7b">Celluloid</div>
<div class="t" style="left:1265.50px;top:274px;font-size:13.2px;line-height:16px;letter-spacing:0.232px;color:#e6e6e6;font-weight:bold">Home</div>
<div class="t" style="left:891.60px;top:302px;font-size:12.9px;line-height:16px;letter-spacing:0.233px;color:#e0e0e0">File</div>
<div class="t" style="left:928.60px;top:302px;font-size:12.9px;line-height:16px;letter-spacing:0.323px;color:#e0e0e0">Edit</div>
<div class="t" style="left:968.40px;top:302px;font-size:12.9px;line-height:16px;letter-spacing:0.067px;color:#e0e0e0">View</div>
<div class="t" style="left:1013.60px;top:302px;font-size:12.9px;line-height:16px;letter-spacing:-0.800px;color:#e0e0e0">Go</div>
<div class="t" style="left:1045.60px;top:302px;font-size:12.9px;line-height:16px;letter-spacing:0.522px;color:#e0e0e0">Bookmarks</div>
<div class="t" style="left:1129.80px;top:302px;font-size:12.9px;line-height:16px;letter-spacing:0.553px;color:#e0e0e0">Help</div>
<div class="t" style="left:1069.50px;top:337px;font-size:13.2px;line-height:16px;letter-spacing:-0.095px;color:#ececec;font-weight:bold">itsfoss</div>
<div class="t" style="left:908.50px;top:373px;font-size:13.0px;line-height:16px;letter-spacing:0.100px;color:#e8e8e8;font-weight:bold">My Computer</div>
<div class="t" style="left:908.50px;top:670px;font-size:13.0px;line-height:16px;letter-spacing:0.457px;color:#e8e8e8;font-weight:bold">Network</div>
<div class="t" style="left:931.90px;top:400px;font-size:12.9px;line-height:16px;letter-spacing:0.361px;color:#e0e0e0">Home</div>
<div class="t" style="left:931.90px;top:427px;font-size:12.9px;line-height:16px;letter-spacing:0.530px;color:#e0e0e0">Desktop</div>
<div class="t" style="left:931.90px;top:454px;font-size:12.9px;line-height:16px;letter-spacing:0.481px;color:#e0e0e0">Documents</div>
<div class="t" style="left:931.90px;top:481px;font-size:12.9px;line-height:16px;letter-spacing:0.221px;color:#e0e0e0">Music</div>
<div class="t" style="left:931.90px;top:508px;font-size:12.9px;line-height:16px;letter-spacing:0.211px;color:#e0e0e0">Pictures</div>
<div class="t" style="left:932.40px;top:535px;font-size:12.9px;line-height:16px;letter-spacing:0.293px;color:#e0e0e0">Videos</div>
<div class="t" style="left:931.90px;top:562px;font-size:12.9px;line-height:16px;letter-spacing:0.684px;color:#e0e0e0">Downloads</div>
<div class="t" style="left:931.90px;top:589px;font-size:12.9px;line-height:16px;letter-spacing:-0.012px;color:#e0e0e0">Recent</div>
<div class="t" style="left:931.90px;top:616px;font-size:12.9px;line-height:16px;letter-spacing:0.091px;color:#e0e0e0">File System</div>
<div class="t" style="left:932.40px;top:643px;font-size:12.9px;line-height:16px;letter-spacing:-0.101px;color:#e0e0e0">Trash</div>
<div class="t" style="left:931.90px;top:697px;font-size:12.9px;line-height:16px;letter-spacing:0.662px;color:#e0e0e0">Network</div>
<div class="t" style="left:1096.60px;top:449px;font-size:12.9px;line-height:16px;letter-spacing:0.680px;color:#dadada">Desktop</div>
<div class="t" style="left:1211.50px;top:449px;font-size:12.9px;line-height:16px;letter-spacing:0.556px;color:#dadada">Documents</div>
<div class="t" style="left:1335.80px;top:449px;font-size:12.9px;line-height:16px;letter-spacing:0.671px;color:#dadada">Downloads</div>
<div class="t" style="left:1476.80px;top:449px;font-size:12.9px;line-height:16px;letter-spacing:0.246px;color:#dadada">Music</div>
<div class="t" style="left:1592.80px;top:449px;font-size:12.9px;line-height:16px;letter-spacing:0.226px;color:#dadada">Pictures</div>
<div class="t" style="left:1103.70px;top:575px;font-size:12.9px;line-height:16px;letter-spacing:0.347px;color:#dadada">Public</div>
<div class="t" style="left:1214.40px;top:575px;font-size:12.9px;line-height:16px;letter-spacing:0.362px;color:#dadada">Templates</div>
<div class="t" style="left:1350.40px;top:575px;font-size:12.9px;line-height:16px;letter-spacing:0.313px;color:#dadada">Videos</div>
<div class="t" style="left:1204.30px;top:824px;font-size:12.9px;line-height:16px;letter-spacing:-0.103px;color:#dedede">8 items, Free space: 9.3 GB</div>
<div class="t" style="left:1882.30px;top:1053px;font-size:13.2px;line-height:16px;letter-spacing:-0.174px;color:#e6e6e6;font-weight:bold">19:48</div>
<div class="t" style="left:86.30px;top:80px;font-size:13.33px;line-height:16px;letter-spacing:0.003px;color:#f6f2f6;text-shadow:1px 1px 0.5px rgba(0,0,0,.85),0 0 2px rgba(0,0,0,.3)">Computer</div>
<div class="t" style="left:99.20px;top:180px;font-size:13.33px;line-height:16px;letter-spacing:-0.080px;color:#f6f2f6;text-shadow:1px 1px 0.5px rgba(0,0,0,.85),0 0 2px rgba(0,0,0,.3)">Home</div>
</body>
</html>
